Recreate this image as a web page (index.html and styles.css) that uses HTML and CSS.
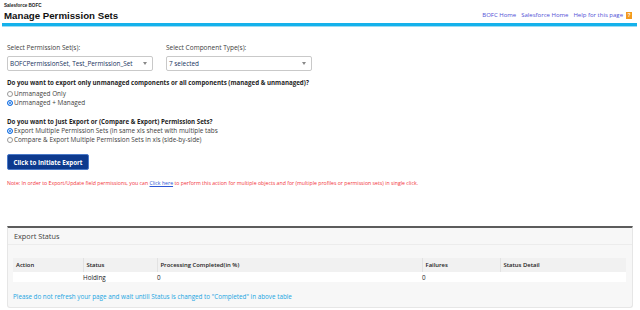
FILE: index.html
```html
<!DOCTYPE html>
<html lang="en">
<head>
    <meta charset="UTF-8">
    <title>Manage Permission Sets</title>
    <link rel="stylesheet" href="styles.css">
</head>
<body>
    <header class="topbar">
        <div class="brand">
            <div class="org">Salesforce BOFC</div>
            <h1>Manage Permission Sets</h1>
        </div>
        <nav class="links">
            <a href="#">BOFC Home</a>
            <a href="#">Salesforce Home</a>
            <a href="#">Help for this page</a>
            <span class="help-icon">?</span>
        </nav>
    </header>
    <div class="rule"></div>

    <main class="content">
        <div class="pickers">
            <div class="picker">
                <label>Select Permission Set(s):</label>
                <div class="select">
                    <span>BOFCPermissionSet, Test_Permission_Set</span>
                    <span class="caret"></span>
                </div>
            </div>
            <div class="picker">
                <label>Select Component Type(s):</label>
                <div class="select">
                    <span>7 selected</span>
                    <span class="caret"></span>
                </div>
            </div>
        </div>

        <div class="group group-first">
            <p class="question">Do you want to export only unmanaged components or all components (managed &amp; unmanaged)?</p>
            <div class="options">
                <div class="option"><span class="radio"></span>Unmanaged Only</div>
                <div class="option"><span class="radio checked"></span>Unmanaged + Managed</div>
            </div>
        </div>

        <div class="group group-second">
            <p class="question">Do you want to just Export or (Compare &amp; Export) Permission Sets?</p>
            <div class="options">
                <div class="option"><span class="radio checked"></span>Export Multiple Permission Sets (in same xls sheet with multiple tabs</div>
                <div class="option"><span class="radio"></span>Compare &amp; Export Multiple Permission Sets in xls (side-by-side)</div>
            </div>
        </div>

        <button class="btn-export">Click to Initiate Export</button>

        <p class="note">Note: In order to Export/Update field permissions, you can <a href="#">Click here</a> to perform this action for multiple objects and for (multiple profiles or permission sets) in single click.</p>

        <section class="panel">
            <h2 class="panel-title">Export Status</h2>
            <div class="panel-body">
                <table class="status-table">
                    <colgroup>
                        <col class="c-action">
                        <col class="c-status">
                        <col class="c-progress">
                        <col class="c-fail">
                        <col>
                    </colgroup>
                    <thead>
                        <tr>
                            <th>Action</th>
                            <th>Status</th>
                            <th>Processing Completed(in %)</th>
                            <th>Failures</th>
                            <th>Status Detail</th>
                        </tr>
                    </thead>
                    <tbody>
                        <tr>
                            <td></td>
                            <td>Holding</td>
                            <td>0</td>
                            <td>0</td>
                            <td></td>
                        </tr>
                    </tbody>
                </table>
                <p class="wait-note">Please do not refresh your page and wait untill Status is changed to "Completed" in above table</p>
            </div>
        </section>
    </main>
</body>
</html>
```

FILE: styles.css
```css
* {
    margin: 0;
    padding: 0;
    box-sizing: border-box;
}

body {
    font-family: "Open Sans", "Liberation Sans", sans-serif;
    font-size: 6.5px;
    color: #16325c;
    background: #ffffff;
    width: 640px;
}

a {
    text-decoration: none;
}

/* header */
.topbar {
    display: flex;
    justify-content: space-between;
    align-items: flex-end;
    padding: 1px 8px 0 4px;
    height: 22px;
}

.org {
    font-family: "Liberation Sans", Arial, sans-serif;
    font-size: 4.6px;
    font-weight: bold;
    line-height: 6px;
    color: #222;
}

h1 {
    font-family: "Liberation Sans", Arial, sans-serif;
    font-size: 9.7px;
    line-height: 13px;
    font-weight: bold;
    color: #111;
}

.links {
    display: flex;
    align-items: center;
    gap: 5px;
    padding-bottom: 3px;
}

.links a {
    font-size: 6px;
    color: #4f4fd6;
}

.help-icon {
    display: inline-block;
    width: 6px;
    height: 7px;
    margin-left: -2px;
    background: #f39a1e;
    color: #fff;
    font-family: "Liberation Sans", Arial, sans-serif;
    font-size: 5px;
    font-weight: bold;
    line-height: 7px;
    text-align: center;
}

.rule {
    margin: 1px 3px 0 2px;
    height: 4px;
    background: #14b1eb;
    border-bottom: 1px solid #9bdcf5;
}

/* main form */
.content {
    padding: 17px 7px 0 7px;
}

.pickers {
    display: flex;
    gap: 13px;
}

.picker label {
    display: block;
    line-height: 8px;
    margin-bottom: 4px;
    color: #3e3e3c;
}

.select {
    display: flex;
    align-items: center;
    justify-content: space-between;
    width: 146px;
    height: 15px;
    padding: 0 5px 0 2px;
    border: 1px solid #c9c9c9;
    border-radius: 2px;
    background: #fff;
    font-size: 6.4px;
    color: #16325c;
}

.caret {
    width: 0;
    height: 0;
    border-left: 2.5px solid transparent;
    border-right: 2.5px solid transparent;
    border-top: 3px solid #888;
}

.group-first {
    margin-top: 8px;
}

.group-second {
    margin-top: 11px;
}

.question {
    font-size: 6.2px;
    font-weight: bold;
    line-height: 8px;
    color: #1e1e1e;
}

.group-first .options {
    margin-top: 2px;
}

.option {
    display: flex;
    align-items: center;
    gap: 1px;
    line-height: 9px;
    font-size: 6.4px;
    color: #3e3e3c;
}

.radio {
    width: 6px;
    height: 6px;
    border: 1px solid #999;
    border-radius: 50%;
    background: #fff;
}

.radio.checked {
    border: 1.5px solid #1b74e4;
    background: #1b74e4;
    box-shadow: inset 0 0 0 1px #fff;
}

.btn-export {
    display: block;
    margin-top: 10px;
    width: 82px;
    height: 16px;
    background: #0d3a8e;
    border: 1px solid #4a79c8;
    border-radius: 2px;
    color: #fff;
    font-family: "Open Sans", "Liberation Sans", sans-serif;
    font-size: 6.2px;
    font-weight: bold;
}

.note {
    margin-top: 9px;
    line-height: 8px;
    font-size: 5.2px;
    color: #f2333a;
}

.note a {
    color: #2c57d4;
    text-decoration: underline;
}

/* status panel */
.panel {
    margin-top: 39px;
    width: 626px;
    background: #f7f7f7;
    border: 1px solid #e6e6e6;
    border-top: 2px solid #5c5c5c;
    border-radius: 0 0 3px 3px;
}

.panel-title {
    padding: 0 6px;
    height: 17px;
    line-height: 17px;
    font-size: 7.3px;
    font-weight: normal;
    color: #3e3e3c;
    border-bottom: 1px solid #ececec;
}

.panel-body {
    padding: 13px 5px 6px 5px;
}

.status-table {
    width: 613px;
    border-collapse: collapse;
    table-layout: fixed;
    background: #fff;
    font-size: 5.9px;
    color: #222;
}

.c-action { width: 70px; }
.c-status { width: 74px; }
.c-progress { width: 265px; }
.c-fail { width: 78px; }

.status-table th {
    height: 14px;
    padding-left: 3px;
    text-align: left;
    font-weight: 600;
    background: #f1f1f1;
    border-left: 1px solid #e2e2e2;
}

.status-table th:first-child {
    border-left: none;
}

.status-table td {
    height: 10px;
    padding-left: 0;
    font-size: 6.3px;
}

.wait-note {
    margin-top: 11px;
    line-height: 8px;
    font-size: 6.3px;
    color: #22a6e2;
}
```
